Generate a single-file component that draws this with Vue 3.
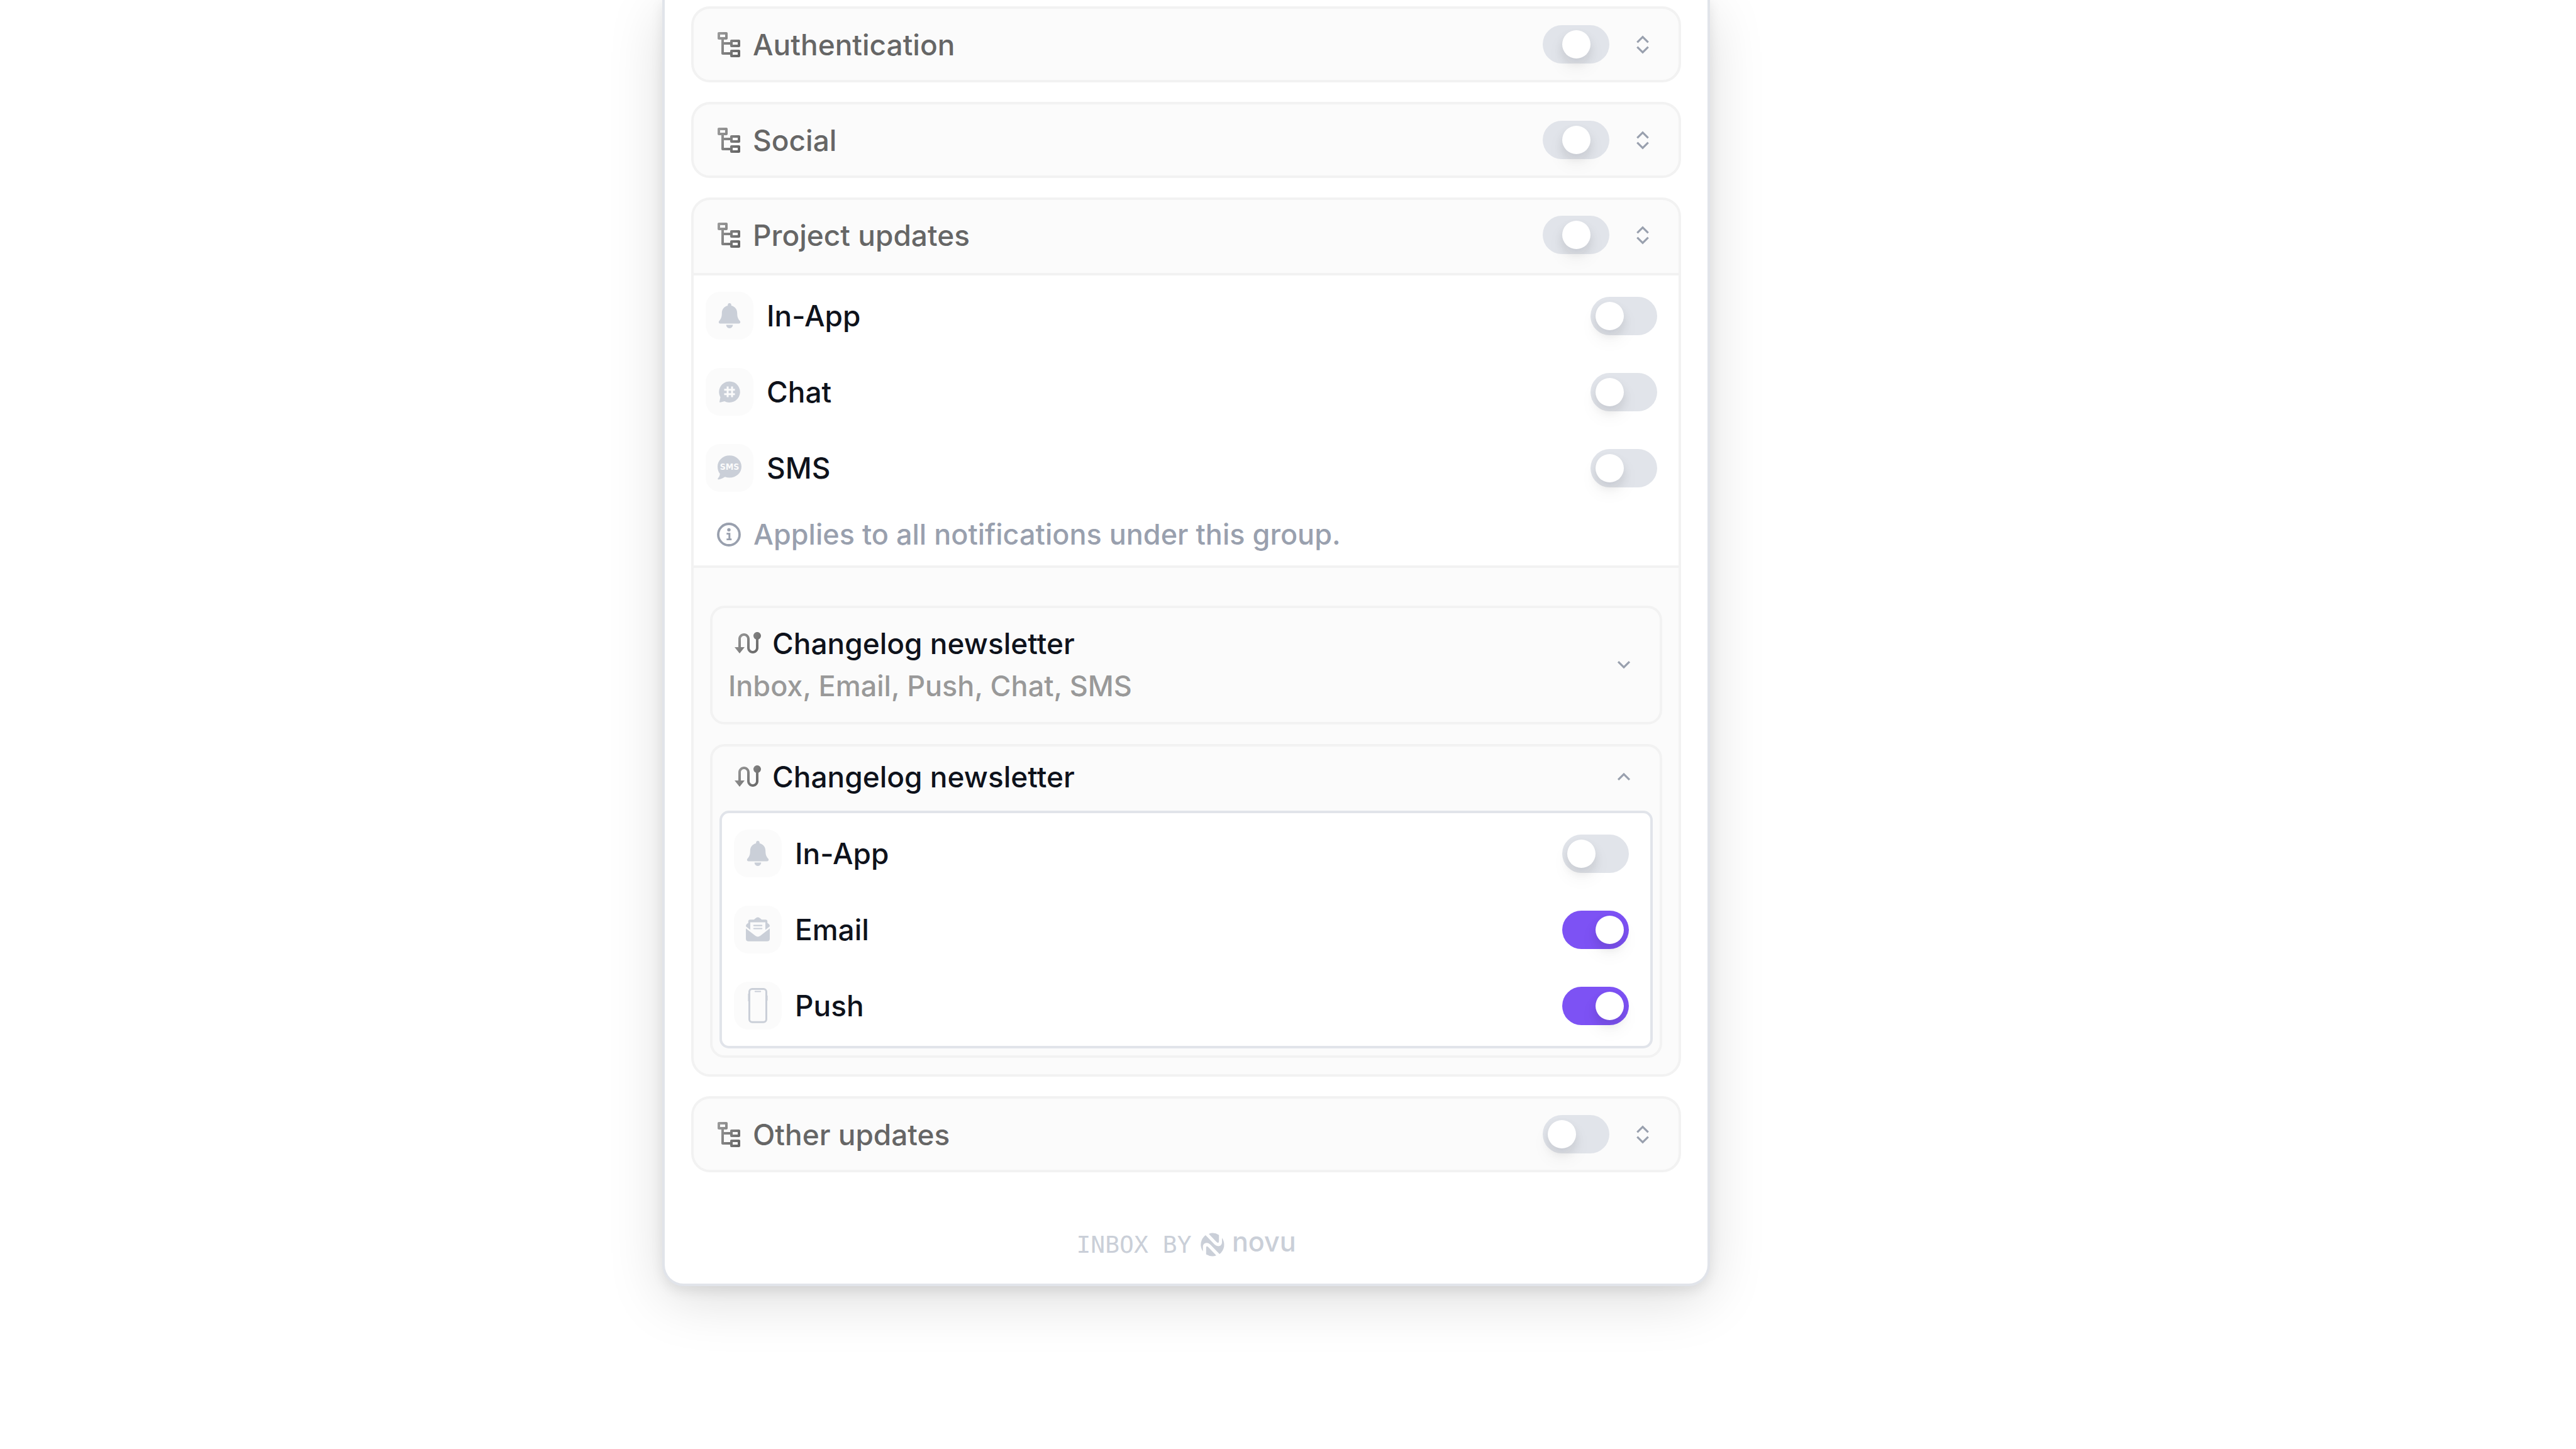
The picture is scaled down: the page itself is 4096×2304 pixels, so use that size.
<script setup>
import { reactive, ref } from 'vue'

const groups = reactive([
  { id: 'auth', name: 'Authentication', state: 'mixed' },
  { id: 'social', name: 'Social', state: 'mixed' },
  {
    id: 'project',
    name: 'Project updates',
    state: 'mixed',
    open: true,
    channels: [
      { id: 'in-app', name: 'In-App', on: false },
      { id: 'chat', name: 'Chat', on: false },
      { id: 'sms', name: 'SMS', on: false },
    ],
  },
  { id: 'other', name: 'Other updates', state: 'off' },
])

const workflowChannels = reactive([
  { id: 'in-app', name: 'In-App', on: false },
  { id: 'email', name: 'Email', on: true },
  { id: 'push', name: 'Push', on: true },
])

const summary = ref('Inbox, Email, Push, Chat, SMS')
</script>

<template>
  <svg class="sprite" aria-hidden="true">
    <defs>
      <linearGradient id="fade" x1="0" y1="0.2" x2="1" y2="0.8">
        <stop offset="0" stop-color="#999" />
        <stop offset="1" stop-color="#666" />
      </linearGradient>
      <symbol id="icon-in-app" viewBox="0 0 76 76">
        <path d="M38 18c1.500 0 2.800 1.200 2.800 2.700v1.300C46 23 50.200 27.500 50.200 34c0 6 1.300 9 4.400 12.600 1.200 1.400.4 3.800-1.600 3.800H23c-2 0-2.800-2.400-1.600-3.800C24.500 43 25.800 40 25.800 34c0-6.500 4.200-11 9.400-12v-1.300c0-1.500 1.300-2.700 2.800-2.700ZM32.700 52.600h10.600c0 3-2.300 5.400-5.300 5.400s-5.300-2.400-5.300-5.400Z" />
      </symbol>
      <symbol id="icon-chat" viewBox="0 0 76 76">
        <path d="M38 21.400A16.800 16.800 0 1 1 30 53l-6.600 1.800c-1 .2-1.500-.3-1.300-1.300L23.500 46.500A16.800 16.800 0 0 1 38 21.400Z" />
        <path class="cut" d="M35 29.500v17M42 29.500v17M29.500 34.700h17M29.500 41.700h17" />
      </symbol>
      <symbol id="icon-sms" viewBox="0 0 76 76">
        <path d="M38 18.300c10.600 0 19 7.800 19 17.600s-8.400 17.600-19 17.600c-2.600 0-5-.4-7.300-1.200-2.700 1.900-6 3.500-10.200 4.200-1.200.1-1.700-1-.9-1.900 2-2.300 3-4.800 3.100-7.300-2.400-3-3.700-7-3.700-11.400 0-9.800 8.400-17.600 19-17.600Z" />
        <text class="cut-text" x="38" y="41" text-anchor="middle">SMS</text>
      </symbol>
      <symbol id="icon-email" viewBox="0 0 76 76">
        <path d="M19 36.200l15.500 12.100q3.500 2.200 7 0L57 36.200v16.300q0 4.300-4.300 4.300H23.300q-4.300 0-4.300-4.300Z" />
        <path d="M31.800 22.300q3.700-3.800 6.200-3.800t6.200 3.800h6q3 0 3 3v2.200l2.600 2q1.200 1.200 1.200 3.500L50 38.600V26.500H26v12.100L19 33q0-2.300 1.200-3.500l2.600-2v-2.200q0-3 3-3Z" />
        <path d="M31.800 30.500h12.400q1.100 0 1.100 1.100t-1.100 1.100H31.800q-1.100 0-1.100-1.100t1.100-1.100ZM31.800 35.400h12.400q1.100 0 1.100 1.100t-1.100 1.100H31.800q-1.100 0-1.100-1.100t1.100-1.100Z" />
      </symbol>
      <symbol id="icon-push" viewBox="0 0 76 76">
        <rect class="line" x="24.500" y="11.400" width="27" height="52.800" rx="4.500" />
        <path d="M33.800 14.600h8.400q1 0 1 1t-1 1h-8.400q-1 0-1-1t1-1ZM22.400 19h1v12h-1ZM52.600 22h1v8h-1Z" />
      </symbol>
      <symbol id="icon-tree" viewBox="0 0 24 24">
        <path fill="url(#fade)" d="M10 2C10.552 2 11 2.448 11 3V7C11 7.552 10.552 8 10 8H8V10H13V9C13 8.448 13.448 8 14 8H20C20.552 8 21 8.448 21 9V13C21 13.552 20.552 14 20 14H14C13.448 14 13 13.552 13 13V12H8V18H13V17C13 16.448 13.448 16 14 16H20C20.552 16 21 16.448 21 17V21C21 21.552 20.552 22 20 22H14C13.448 22 13 21.552 13 21V20H7C6.448 20 6 19.552 6 19V8H4C3.448 8 3 7.552 3 7V3C3 2.448 3.448 2 4 2H10ZM19 18H15V20H19V18ZM19 10H15V12H19V10ZM9 4H5V6H9V4Z" />
      </symbol>
      <symbol id="icon-route" viewBox="0 0 24 24">
        <path fill="url(#fade)" d="M4 15V8.500C4 6.015 6.015 4 8.500 4C10.985 4 13 6.015 13 8.500V15.500C13 16.881 14.119 18 15.500 18C16.881 18 18 16.881 18 15.500V8.829C16.835 8.417 16 7.306 16 6C16 4.343 17.343 3 19 3C20.657 3 22 4.343 22 6C22 7.306 21.165 8.417 20 8.829V15.500C20 17.985 17.985 20 15.500 20C13.015 20 11 17.985 11 15.500V8.500C11 7.119 9.881 6 8.500 6C7.119 6 6 7.119 6 8.500V15H9L5 20L1 15H4Z" />
      </symbol>
    </defs>
  </svg>

  <main class="page">
    <section class="panel" aria-label="Notification preferences">
      <div class="groups">
        <article v-for="group in groups" :key="group.id" class="group" :class="{ 'group-open': group.open }">
          <header class="group-head">
            <svg class="glyph" aria-hidden="true"><use href="#icon-tree" /></svg>
            <label class="group-name" :for="`group-${group.id}`">{{ group.name }}</label>
            <input
              :id="`group-${group.id}`"
              class="switch"
              type="checkbox"
              role="switch"
              :indeterminate="group.state === 'mixed'"
            />
            <button class="toggle-button" type="button" :aria-expanded="!!group.open" :aria-label="`Expand ${group.name}`">
              <svg class="arrow" viewBox="0 0 24 24" aria-hidden="true">
                <path d="M18.207 9.043 12 2.836 5.793 9.043 7.207 10.457 12 5.664 16.793 10.457 18.207 9.043ZM5.793 14.957 12 21.164 18.207 14.957 16.793 13.543 12 18.336 7.207 13.543 5.793 14.957Z" />
              </svg>
            </button>
          </header>

          <template v-if="group.open">
            <div class="group-body">
              <ul class="channels">
                <li v-for="channel in group.channels" :key="channel.id" class="channel">
                  <span class="tile"><svg class="tile-icon" aria-hidden="true"><use :href="`#icon-${channel.id}`" /></svg></span>
                  <label class="channel-name" :for="`${group.id}-${channel.id}`">{{ channel.name }}</label>
                  <input :id="`${group.id}-${channel.id}`" v-model="channel.on" class="switch" type="checkbox" role="switch" />
                </li>
              </ul>
              <p class="hint">
                <svg class="info" viewBox="0 0 38 38" aria-hidden="true">
                  <circle cx="19" cy="19" r="17" fill="none" stroke="currentColor" stroke-width="3.800" />
                  <circle cx="19" cy="11.400" r="2.700" />
                  <path d="M15.300 16.200h6v9h2v2.900h-8v-2.900h3v-6.100h-3Z" />
                </svg>
                Applies to all notifications under this group.
              </p>
            </div>

            <div class="workflows">
              <section class="workflow workflow-closed">
                <div class="workflow-text">
                  <h3 class="workflow-name">
                    <svg class="glyph" aria-hidden="true"><use href="#icon-route" /></svg>
                    Changelog newsletter
                  </h3>
                  <p class="summary">{{ summary }}</p>
                </div>
                <button class="toggle-button" type="button" aria-expanded="false" aria-label="Expand workflow">
                  <svg class="arrow" viewBox="0 0 24 24" aria-hidden="true">
                    <path d="M12 13.172 16.950 8.222 18.364 9.636 12 16 5.636 9.636 7.050 8.222Z" />
                  </svg>
                </button>
              </section>

              <section class="workflow workflow-open">
                <header class="workflow-head">
                  <h3 class="workflow-name">
                    <svg class="glyph" aria-hidden="true"><use href="#icon-route" /></svg>
                    Changelog newsletter
                  </h3>
                  <button class="toggle-button" type="button" aria-expanded="true" aria-label="Collapse workflow">
                    <svg class="arrow" viewBox="0 0 24 24" aria-hidden="true">
                      <path d="M12 10.828 7.050 15.778 5.636 14.364 12 8 18.364 14.364 16.950 15.778Z" />
                    </svg>
                  </button>
                </header>
                <ul class="channels channels-boxed">
                  <li v-for="channel in workflowChannels" :key="channel.id" class="channel">
                    <span class="tile"><svg class="tile-icon" aria-hidden="true"><use :href="`#icon-${channel.id}`" /></svg></span>
                    <label class="channel-name" :for="`workflow-${channel.id}`">{{ channel.name }}</label>
                    <input :id="`workflow-${channel.id}`" v-model="channel.on" class="switch" type="checkbox" role="switch" />
                  </li>
                </ul>
              </section>
            </div>
          </template>
        </article>
      </div>

      <footer class="footer">
        <span class="credit">INBOX BY</span>
        <svg class="brand" viewBox="830 165 550 134" role="img" aria-label="novu">
          <path d="M876 172Q904 160 933 178V213Q932 228 920 218ZM858 179L909 232Q925 246 942 237Q950 231 950 220V194A66 66 0 0 1 936 285L884 231Q872 218 855 224Q843 230 843 243V270A66 66 0 0 1 858 179ZM918 293Q890 304 861 287V248Q862 236 873 246Z" />
          <text class="brand-name" x="1006" y="272">novu</text>
        </svg>
      </footer>
    </section>
  </main>
</template>

<style>
body {
  background: #fff;
}
</style>

<style scoped>
.sprite {
  position: absolute;
  width: 0;
  height: 0;
}

.page {
  display: grid;
  grid-template-columns: 1057fr 1658fr 1381fr;
  align-items: start;
  min-height: 100vh;
  overflow: hidden;
  font-family: Inter, "Liberation Sans", sans-serif;
  font-size: 46px;
  font-weight: 500;
  line-height: 60px;
  color: #0e121b;
}

.panel {
  grid-column: 2;
  padding: 10px 42px 32px;
  background: #fff;
  border-radius: 0 0 30px 30px;
  box-shadow:
    0 0 0 4px #e1e4ea,
    0 8px 19px 4px rgba(0, 0, 0, 0.08),
    0 22px 92px rgba(0, 0, 0, 0.15);
}

.groups {
  display: flex;
  flex-direction: column;
  gap: 31px;
}

.group {
  overflow: hidden;
  background: #fbfbfb;
  border: 4px solid #f2f2f2;
  border-radius: 30px;
}

.group-head {
  display: flex;
  align-items: center;
  padding: 26px 38px 26px 32px;
}

.group-open .group-head {
  padding-block: 25px 30px;
}

.glyph {
  flex: none;
  width: 48px;
  height: 48px;
}

.group-name {
  flex: 1;
  margin-left: 14px;
  color: #666;
}

.switch {
  appearance: none;
  flex: none;
  width: 106px;
  height: 61px;
  margin: 0;
  padding: 8px;
  border-radius: 31px;
  background: #e1e4ea;
}

.switch::before {
  content: "";
  display: block;
  width: 45px;
  height: 45px;
  border-radius: 50%;
  background: #fff;
  box-shadow:
    0 15px 30px rgba(27, 28, 29, 0.06),
    0 8px 15px rgba(14, 18, 27, 0.08);
}

.switch:indeterminate::before {
  margin-inline: auto;
}

.switch:checked {
  background: #7d52f4;
}

.switch:checked::before {
  margin-left: auto;
}

.toggle-button {
  display: flex;
  flex: none;
  padding: 0;
  border: 0;
  background: none;
  color: #99a0ae;
}

.group-head .toggle-button {
  margin-left: 34px;
}

.arrow {
  width: 38px;
  height: 38px;
  fill: currentColor;
}

.group-body {
  padding-bottom: 19px;
  background: #fff;
  border-block: 4px solid #f2f2f2;
}

.channels {
  display: flex;
  flex-direction: column;
  gap: 45px;
  margin: 0;
  padding: 26px 34px 26px 19px;
  list-style: none;
}

.channel {
  display: flex;
  align-items: center;
}

.tile {
  flex: none;
  width: 76px;
  height: 76px;
  border-radius: 23px;
  background: #fbfbfb;
}

.tile-icon {
  display: block;
  width: 76px;
  height: 76px;
  fill: #cacfd8;
}

.cut {
  fill: none;
  stroke: #fbfbfb;
  stroke-width: 3;
}

.cut-text {
  fill: #fbfbfb;
  font: 700 14px/1 "Liberation Sans Narrow", "DejaVu Sans Condensed", sans-serif;
}

.line {
  fill: none;
  stroke: #cacfd8;
  stroke-width: 3;
}

.channel-name {
  flex: 1;
  margin-left: 21px;
}

.hint {
  display: flex;
  align-items: center;
  gap: 20px;
  margin: 12px 0 0;
  padding-left: 37px;
  font-size: 45px;
  color: #99a0ae;
}

.info {
  width: 38px;
  height: 38px;
  fill: currentColor;
}

.workflows {
  display: flex;
  flex-direction: column;
  gap: 31px;
  padding: 60px 26px 26px;
}

.workflow {
  border: 4px solid #f2f2f2;
  border-radius: 23px;
}

.workflow-closed {
  display: flex;
  align-items: center;
  justify-content: space-between;
  padding: 26px 38px 27px 25px;
}

.workflow-text {
  display: flex;
  flex-direction: column;
  gap: 8px;
}

.workflow-name {
  display: flex;
  align-items: center;
  gap: 14px;
  margin: 0;
  padding-left: 8px;
  font-size: 46px;
  font-weight: 500;
}

.summary {
  margin: 0;
  font-size: 45px;
  color: #999;
}

.workflow-open {
  padding: 0 11px 11px;
}

.workflow-head {
  display: flex;
  align-items: center;
  justify-content: space-between;
  padding: 18px 27px 24px 14px;
}

.channels-boxed {
  background: #fff;
  border: 4px solid #e1e4ea;
  border-radius: 15px;
}

.footer {
  display: flex;
  align-items: center;
  justify-content: center;
  gap: 14px;
  margin-top: 85px;
  padding-left: 4px;
  color: #cacfd8;
}

.credit {
  font-family: "DejaVu Sans Mono", monospace;
  font-size: 38px;
  font-weight: 400;
}

.brand {
  width: 156px;
  height: 38px;
  overflow: visible;
  fill: currentColor;
}

.brand-name {
  font-size: 152px;
  font-weight: 500;
}
</style>
